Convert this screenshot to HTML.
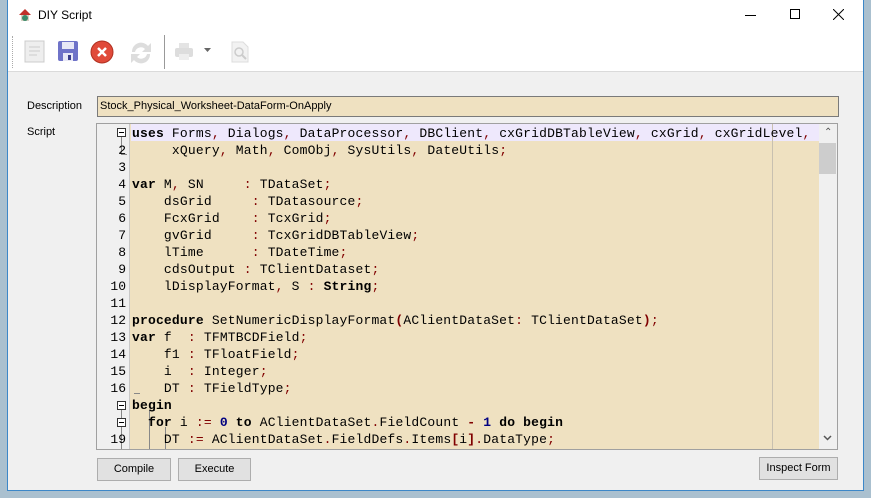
<!DOCTYPE html>
<html><head><meta charset="utf-8"><style>
*{margin:0;padding:0;box-sizing:border-box}
body{width:871px;height:498px;background:#aac0cf;position:relative;overflow:hidden;font-family:"Liberation Sans",sans-serif}
.win{position:absolute;left:7px;top:0;width:857px;height:491px;background:#f0f0f0;border:1px solid #3c87c8;border-top:none}
.title{position:absolute;left:0;top:0;width:855px;height:72px;background:#fff;border-bottom:1px solid #dadada}
.abs{position:absolute}
.lbl{font-size:11px;color:#000}
.code{position:absolute;left:96px;top:123px;width:742px;height:327px;border:1px solid #a0a0a0;background:#efe1c1;overflow:hidden}
.gut{position:absolute;left:0;top:0;width:33px;height:100%;background:#f0f0f0;border-right:1px solid #c8c8c8}
.ln{position:absolute;left:0;width:29px;text-align:right;font:13px "Liberation Mono",monospace;color:#000;height:17px;line-height:17px}
.tx{position:absolute;left:35px;white-space:pre;font:13px "Liberation Mono",monospace;letter-spacing:0.18px;color:#000;height:17px;line-height:17px}
b{font-weight:bold}
.p{color:#800000}
.n{color:#000080;font-weight:bold}
.fold{position:absolute;left:20px;width:9px;height:9px;border:1px solid #333;background:#fff}
.fold:after{content:"";position:absolute;left:1px;top:3px;width:5px;height:1px;background:#000}
.btn{position:absolute;height:23px;border:1px solid #adadad;background:#e1e1e1;font-size:11px;text-align:center;line-height:21px}
</style></head><body>
<div class="win">
<div class="title">
 <svg class="abs" style="left:9px;top:7px" width="16" height="16" viewBox="0 0 16 16"><path d="M2 8 L8 2 L14 8 Z" fill="#c0302a"/><rect x="4" y="8" width="8" height="6" fill="#d9d2c4"/><circle cx="8" cy="11" r="3" fill="#3a8a6a"/></svg>
 <div class="abs" style="left:30px;top:8px;font-size:12px;color:#000">DIY Script</div>
 <div class="abs" style="left:737px;top:15px;width:11px;height:1px;background:#000"></div>
 <div class="abs" style="left:782px;top:9px;width:10px;height:10px;border:1px solid #000"></div>
 <svg class="abs" style="left:825px;top:9px" width="11" height="11"><path d="M0 0L11 11M11 0L0 11" stroke="#000" stroke-width="1"/></svg>
 <div class="abs" style="left:4px;top:36px;width:1px;height:32px;border-left:1px dotted #aaa"></div>
 <svg class="abs" style="left:15px;top:39px" width="24" height="26"><rect x="2" y="2" width="19" height="21" fill="#eee" stroke="#ccc"/><path d="M6 8h11M6 12h11M6 16h8" stroke="#ccc"/></svg>
 <svg class="abs" style="left:49px;top:40px" width="22" height="22"><rect x="1" y="1" width="20" height="20" rx="2" fill="#6f73c8"/><rect x="5" y="2" width="12" height="7" fill="#e8e8f6"/><rect x="6" y="13" width="10" height="8" fill="#e8e8f6"/><rect x="11" y="15" width="3" height="5" fill="#3a3d8a"/></svg>
 <svg class="abs" style="left:82px;top:40px" width="24" height="24"><circle cx="12" cy="12" r="11" fill="#e04a3a" stroke="#b03020"/><path d="M8 8L16 16M16 8L8 16" stroke="#fff" stroke-width="2.5"/></svg>
 <svg class="abs" style="left:118px;top:38px" width="30" height="30"><path d="M6 14a9 9 0 0 1 16-6l3-3v9h-9l3-3a6 6 0 0 0-10 3z M24 16a9 9 0 0 1-16 6l-3 3v-9h9l-3 3a6 6 0 0 0 10-3z" fill="#ddd"/></svg>
 <div class="abs" style="left:156px;top:35px;width:1px;height:34px;background:#999"></div>
 <svg class="abs" style="left:164px;top:40px" width="26" height="24"><rect x="7" y="3" width="10" height="6" fill="#e4e4e4"/><rect x="3" y="8" width="18" height="9" rx="2" fill="#ddd"/><rect x="7" y="14" width="10" height="6" fill="#eee"/></svg>
 <svg class="abs" style="left:196px;top:48px" width="8" height="5"><path d="M0 0h7l-3.5 4z" fill="#666"/></svg>
 <svg class="abs" style="left:222px;top:40px" width="20" height="24"><path d="M2 2h11l5 5v15H2z" fill="#f2f2f2" stroke="#ddd"/><circle cx="9" cy="12" r="4" fill="none" stroke="#ccc" stroke-width="1.5"/><path d="M12 15l4 4" stroke="#ccc" stroke-width="2"/></svg>
</div>
<div class="abs lbl" style="left:19px;top:100px">Description</div>
<div class="abs" style="left:89px;top:96px;width:742px;height:21px;border:1px solid #7a7a7a;background:#efe1c1;font-size:11px;line-height:19px;padding-left:2px">Stock_Physical_Worksheet-DataForm-OnApply</div>
<div class="abs lbl" style="left:19px;top:126px">Script</div>
</div>
<div class="code">
 <div class="gut"></div>
 <div class="abs" style="left:34px;top:0;width:688px;height:17px;background:#eee8fc"></div>
 <div class="abs" style="left:675px;top:0;width:1px;height:100%;background:#c8c0b0"></div>
 <div class="abs" style="left:722px;top:0;width:18px;height:100%;background:#f0f0f0"></div>
 <div class="abs" style="left:722px;top:19px;width:17px;height:31px;background:#cdcdcd"></div>
 <div class="abs" style="left:727px;top:3px;font-size:10px;color:#555">&#8963;</div>
 <svg class="abs" style="left:726px;top:311px" width="9" height="6"><path d="M1 1l3.5 3.5L8 1" stroke="#555" stroke-width="1.5" fill="none"/></svg>
 <div class="fold" style="top:4px"></div>
 <div class="abs" style="left:24px;top:13px;width:1px;height:17px;background:#888"></div>
 <div class="abs" style="left:24px;top:30px;width:6px;height:1px;background:#888"></div>
 <div class="fold" style="top:277px"></div>
 <div class="fold" style="top:294px"></div>
 <div class="abs" style="left:24px;top:286px;width:1px;height:8px;background:#888"></div>
 <div class="abs" style="left:24px;top:303px;width:1px;height:24px;background:#888"></div>
 <div class="abs" style="left:37px;top:269px;width:6px;height:1px;background:#888"></div>
 <div class="abs" style="left:52px;top:286px;width:1px;height:41px;background:#888"></div>
 <div class="abs" style="left:52px;top:286px;width:6px;height:1px;background:#888"></div>
 <div class="abs" style="left:68px;top:303px;width:1px;height:24px;background:#888"></div>

 <div class="ln" style="top:18px">2</div><div class="ln" style="top:35px">3</div><div class="ln" style="top:52px">4</div><div class="ln" style="top:69px">5</div><div class="ln" style="top:86px">6</div><div class="ln" style="top:103px">7</div><div class="ln" style="top:120px">8</div><div class="ln" style="top:137px">9</div><div class="ln" style="top:154px">10</div><div class="ln" style="top:171px">11</div><div class="ln" style="top:188px">12</div><div class="ln" style="top:205px">13</div><div class="ln" style="top:222px">14</div><div class="ln" style="top:239px">15</div><div class="ln" style="top:256px">16</div><div class="ln" style="top:307px">19</div>

 <div class="tx" style="top:1px"><b>uses</b> Forms<span class="p">,</span> Dialogs<span class="p">,</span> DataProcessor<span class="p">,</span> DBClient<span class="p">,</span> cxGridDBTableView<span class="p">,</span> cxGrid<span class="p">,</span> cxGridLevel<span class="p">,</span></div>
 <div class="tx" style="top:18px">     xQuery<span class="p">,</span> Math<span class="p">,</span> ComObj<span class="p">,</span> SysUtils<span class="p">,</span> DateUtils<span class="p">;</span></div>
 <div class="tx" style="top:52px"><b>var</b> M<span class="p">,</span> SN     <span class="p">:</span> TDataSet<span class="p">;</span></div>
 <div class="tx" style="top:69px">    dsGrid     <span class="p">:</span> TDatasource<span class="p">;</span></div>
 <div class="tx" style="top:86px">    FcxGrid    <span class="p">:</span> TcxGrid<span class="p">;</span></div>
 <div class="tx" style="top:103px">    gvGrid     <span class="p">:</span> TcxGridDBTableView<span class="p">;</span></div>
 <div class="tx" style="top:120px">    lTime      <span class="p">:</span> TDateTime<span class="p">;</span></div>
 <div class="tx" style="top:137px">    cdsOutput <span class="p">:</span> TClientDataset<span class="p">;</span></div>
 <div class="tx" style="top:154px">    lDisplayFormat<span class="p">,</span> S <span class="p">:</span> <b>String</b><span class="p">;</span></div>
 <div class="tx" style="top:188px"><b>procedure</b> SetNumericDisplayFormat<span class="p"><b>(</b></span>AClientDataSet<span class="p">:</span> TClientDataSet<span class="p"><b>)</b>;</span></div>
 <div class="tx" style="top:205px"><b>var</b> f  <span class="p">:</span> TFMTBCDField<span class="p">;</span></div>
 <div class="tx" style="top:222px">    f1 <span class="p">:</span> TFloatField<span class="p">;</span></div>
 <div class="tx" style="top:239px">    i  <span class="p">:</span> Integer<span class="p">;</span></div>
 <div class="tx" style="top:256px">    DT <span class="p">:</span> TFieldType<span class="p">;</span></div>
 <div class="tx" style="top:273px"><b>begin</b></div>
 <div class="tx" style="top:290px">  <b>for</b> i <span class="p">:=</span> <span class="n">0</span> <b>to</b> AClientDataSet<span class="p">.</span>FieldCount <span class="p"><b>-</b></span> <span class="n">1</span> <b>do</b> <b>begin</b></div>
 <div class="tx" style="top:307px">    DT <span class="p">:=</span> AClientDataSet<span class="p">.</span>FieldDefs<span class="p">.</span>Items<span class="p"><b>[</b></span>i<span class="p"><b>]</b>.</span>DataType<span class="p">;</span></div>
</div>
<div class="btn" style="left:97px;top:458px;width:74px">Compile</div>
<div class="btn" style="left:178px;top:458px;width:73px">Execute</div>
<div class="btn" style="left:759px;top:457px;width:79px">Inspect Form</div>
</body></html>
